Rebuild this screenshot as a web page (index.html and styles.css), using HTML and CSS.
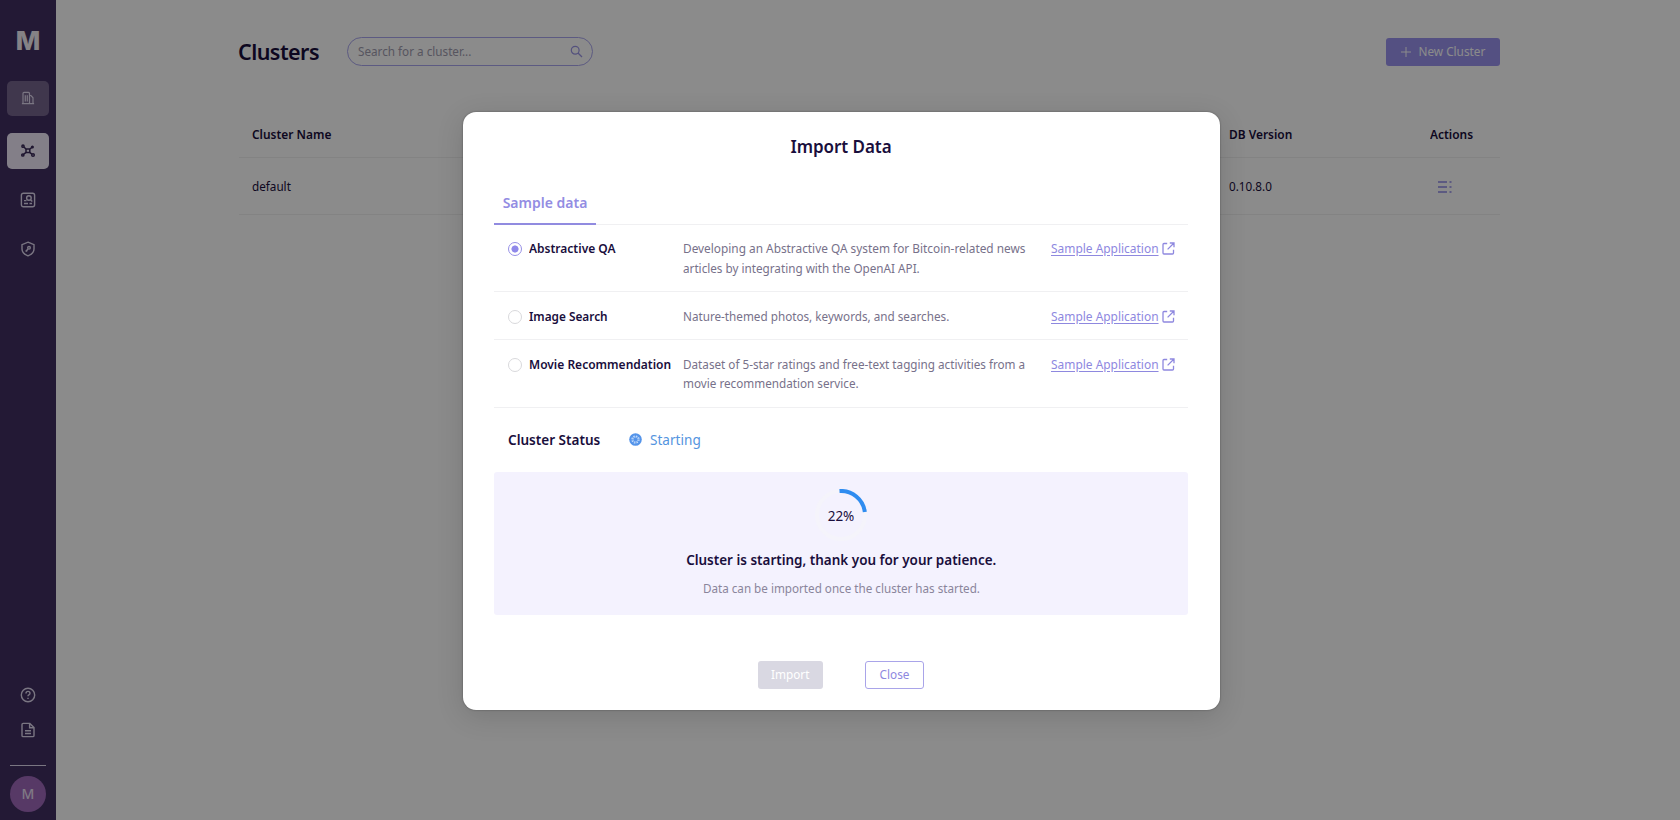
FILE: index.html
```html
<!DOCTYPE html>
<html lang="en">
<head>
<meta charset="utf-8">
<title>Clusters</title>
<link rel="stylesheet" href="styles.css">
</head>
<body>
<div class="app">
  <nav class="sidebar">
    <div class="logo">M</div>
    <a class="nav-item muted"><svg width="14" height="14" viewBox="0 0 14 14"><path d="M2 12.5V2.4Q2 1.4 3 1.4H7.5Q8.5 1.4 8.5 2.4V12.5M8.5 4.5H10L12 6.8V12.5M.9 12.6H13.1M4.3 4.2V10.4M6.3 4.2V10.4"/></svg></a>
    <a class="nav-item active"><svg width="16" height="14" viewBox="0 0 16 14"><rect x="6" y="5" width="3.8" height="3.6" rx=".8"/><circle cx="3" cy="2.2" r="1.1"/><circle cx="12.4" cy="3" r=".8"/><circle cx="2.8" cy="11" r="1.1"/><circle cx="13" cy="11" r="1.3"/><path d="M3.9 3L6.2 5.2M9.6 5.2L11.8 3.5M3.7 10.2L6.2 8.4M9.6 8.4L11.9 10.2"/></svg></a>
    <a class="nav-item"><svg width="16" height="16" viewBox="0 0 16 16"><rect x="1.4" y="1.2" width="13.2" height="13.6" rx="2"/><circle cx="8.9" cy="6" r="2.3"/><path d="M10.5 7.8L12.3 9.6M4 8.6H6.5M4 11.5H8M9.5 11.5H12"/></svg></a>
    <a class="nav-item"><svg width="16" height="16" viewBox="0 0 16 16"><path d="M8 1.2L14 3.6V8Q14 12.6 8 14.8Q2 12.6 2 8V3.6Z"/><circle cx="9" cy="6.8" r="1.3"/><path d="M8 7.9L5.6 10.4M6.6 9.4L7.4 10.2"/></svg></a>
    <div class="nav-bottom">
      <svg width="16" height="16" viewBox="0 0 16 16"><circle cx="8" cy="8" r="6.7"/><path d="M6 6.4Q6 4.4 8 4.4T10 6.3Q10 7.3 8.9 7.9Q8 8.4 8 9.3M8 10.8V12"/></svg>
      <svg width="16" height="16" viewBox="0 0 16 16"><path d="M2 2.6Q2 1.4 3.2 1.4H9.8L14 5.6V13.4Q14 14.6 12.8 14.6H3.2Q2 14.6 2 13.4ZM9.6 1.6V5.8H13.8M5 8.7H11M5 11.5H11"/></svg>
      <div class="nav-rule"></div>
      <div class="avatar">M</div>
    </div>
  </nav>
  <main class="page">
    <header class="topbar">
      <h1>Clusters</h1>
      <div class="search"><span class="body-text">Search for a cluster...</span><svg width="13" height="13" viewBox="0 0 13 13"><circle cx="5.2" cy="5.2" r="3.9"/><path d="M8 8L12 12"/></svg></div>
      <button class="new"><svg width="10" height="10" viewBox="0 0 10 10"><path d="M5 0V10M0 5H10"/></svg><span class="button-text">New Cluster</span></button>
    </header>
    <div class="table">
      <div class="tr th"><div class="c-name"><span>Cluster Name</span></div><div class="c-ver"><span>DB Version</span></div><div class="c-act"><span>Actions</span></div></div>
      <div class="tr"><div class="c-name"><span class="body-text">default</span></div><div class="c-ver"><span class="body-text">0.10.8.0</span></div><div class="c-act"><svg width="16" height="14" viewBox="0 0 16 14"><path d="M1 2H10M1 7H10M1 12H10M12.5 2H14.5M12.5 7H14.5M12.5 12H14.5"/></svg></div></div>
    </div>
  </main>
</div>
<div class="overlay">
  <section class="modal">
    <h2>Import Data</h2>
    <div class="tabs"><div class="tab">Sample data</div></div>
    <div class="row">
      <i class="radio on"></i><b>Abstractive QA</b>
      <p><span class="body-text lead">Developing an Abstractive QA system for Bitcoin-related news</span><br><span class="body-text">articles by integrating with the OpenAI API.</span></p>
      <a class="link"><u>Sample Application</u><svg width="13" height="13" viewBox="0 0 13 13"><path d="M5.2 1.5H2Q1 1.5 1 2.5V11Q1 12 2 12H10.5Q11.5 12 11.5 11V7.8M7.8 1H12V5.2M12 1L5.6 7.4"/></svg></a>
    </div>
    <div class="row short">
      <i class="radio"></i><b class="tight">Image Search</b>
      <p><span class="body-text">Nature-themed photos, keywords, and searches.</span></p>
      <a class="link"><u>Sample Application</u><svg width="13" height="13" viewBox="0 0 13 13"><path d="M5.2 1.5H2Q1 1.5 1 2.5V11Q1 12 2 12H10.5Q11.5 12 11.5 11V7.8M7.8 1H12V5.2M12 1L5.6 7.4"/></svg></a>
    </div>
    <div class="row">
      <i class="radio"></i><b>Movie Recommendation</b>
      <p><span class="body-text">Dataset of 5-star ratings and free-text tagging activities from a</span><br><span class="body-text">movie recommendation service.</span></p>
      <a class="link"><u>Sample Application</u><svg width="13" height="13" viewBox="0 0 13 13"><path d="M5.2 1.5H2Q1 1.5 1 2.5V11Q1 12 2 12H10.5Q11.5 12 11.5 11V7.8M7.8 1H12V5.2M12 1L5.6 7.4"/></svg></a>
    </div>
    <div class="status">
      <b>Cluster Status</b>
      <svg width="13" height="13" viewBox="0 0 13 13"><circle cx="6.5" cy="6.5" r="6.3" fill="#5494ea"/><circle cx="6.5" cy="6.5" r="3.5" fill="none" stroke="#c4dcfb" stroke-width="1.3" stroke-dasharray="1.6 1.15"/><circle cx="6.5" cy="6.5" r="2.4" fill="none" stroke="#b0cff8" stroke-width=".7"/></svg>
      <span>Starting</span>
    </div>
    <div class="panel">
      <div class="ring"><svg width="52" height="52" viewBox="0 0 52 52"><circle cx="26" cy="26" r="24" fill="none" stroke="#f5f4fb" stroke-width="4"/><path d="M24.5 2A24 24 0 0 1 49.8 23" fill="none" stroke="#2f8cf0" stroke-width="4"/></svg><span>22%</span></div>
      <strong>Cluster is starting, thank you for your patience.</strong>
      <em>Data can be imported once the cluster has started.</em>
    </div>
    <div class="buttons"><button class="import"><span class="button-text">Import</span></button><button class="close"><span class="button-text">Close</span></button></div>
  </section>
</div>
</body>
</html>
```
FILE: styles.css
```css
* { box-sizing: border-box; }
body { margin: 0; font: 13px/19.5px "Noto Sans", sans-serif; color: #190e3c; background: #fff; overflow: hidden; }
h1, h2, p { margin: 0; }
button { border: 0; padding: 0; font: inherit; display: flex; align-items: center; justify-content: center; }
svg { display: block; flex: none; }
span, b, u, strong, em { white-space: nowrap; display: inline-block; transform-origin: left center; }
b, strong { font-weight: 600; }
.body-text { transform: scaleX(.9); }
.body-text.lead { transform: scaleX(.911); }
.button-text { transform: scaleX(.905); transform-origin: center; }
.app { display: flex; height: 820px; background: #412f62; }
.sidebar { width: 56px; background: #412f62; display: flex; flex-direction: column; align-items: center; }
.sidebar svg { fill: none; stroke: #e0d8ef; stroke-width: 1.4; }
.logo { margin-top: 25px; height: 31px; font: 800 26px/31px Inter, sans-serif; color: #f4eff6; }
.nav-item { width: 42px; height: 35px; border-radius: 5px; display: flex; align-items: center; justify-content: center; margin-bottom: 14px; }
.nav-item.muted { margin: 24.5px 0 17.5px; background: #76658e; }
.nav-item.muted svg { stroke-width: 1.2; margin-bottom: 1px; }
.nav-item.active { background: #f0eafa; height: 36px; margin-bottom: 13px; }
.nav-item.active svg { stroke: #392858; stroke-width: 1.5; }
.nav-bottom { margin-top: auto; display: flex; flex-direction: column; align-items: center; padding-bottom: 8px; }
.nav-bottom svg { margin-bottom: 19px; }
.nav-rule { width: 36px; height: 1px; background: #e0d8ef; margin: 8px 0 10px; }
.avatar { width: 36px; height: 36px; border-radius: 50%; background: #a069bc; color: #eadff3; font: 500 14px/36px "Noto Sans", sans-serif; text-align: center; }
.page { flex: 1; padding: 37px 180px 0 183px; background: #fff; }
.topbar { display: flex; align-items: center; height: 29px; }
h1 { font-size: 21.5px; font-weight: 600; line-height: 29px; width: 109px; margin-left: -1px; white-space: nowrap; letter-spacing: -.55px; }
.search { width: 246px; height: 29px; border: 1px solid #aaa6ee; border-radius: 15px; display: flex; align-items: center; justify-content: space-between; padding: 0 9px 0 10px; color: #a09caf; }
.search svg { fill: none; stroke: #9a95e6; stroke-width: 1.2; }
.new { margin-left: auto; width: 114px; height: 28px; border-radius: 3px; background: #9a93ee; color: #fff; gap: 8px; }
.new svg { stroke: #fff; stroke-width: 1; transform: translateX(4px); }
.table { margin-top: 36px; }
.tr { height: 57px; border-bottom: 1px solid #f0f0f0; display: flex; align-items: center; padding: 1px 0 0 13px; }
.th { height: 56px; font-weight: 600; align-items: flex-start; padding-top: 22.5px; }
.th span { transform: scaleX(.917); }
.c-name { width: 977px; }
.c-ver { width: 201px; }
.c-act svg { fill: none; stroke: #8f89e8; stroke-width: 1.6; margin-left: 6.5px; }
.overlay { position: absolute; inset: 0; background: rgba(0,0,0,.455); }
.modal { width: 757px; height: 598px; margin: 111.5px 0 0 462.5px; border-radius: 13px; background: #fff; padding: 0 31.5px; box-shadow: 0 6px 28px rgba(0,0,0,.14), 0 0 2px rgba(0,0,0,.4); }
h2 { height: 71px; line-height: 70px; font-size: 17px; font-weight: 600; text-align: center; letter-spacing: -.05px; }
.tabs { height: 42px; border-bottom: 1px solid #f0f0f2; }
.tab { width: 102px; height: 42px; line-height: 40px; text-align: center; border-bottom: 2px solid #918be0; color: #938de3; font-size: 14px; font-weight: 600; white-space: nowrap; }
.row { height: 67.5px; border-bottom: 1px solid #f0f0f2; display: grid; grid-template-columns: 21px 154px 367.5px 1fr; padding: 14.5px 0 0 14px; align-items: start; }
.row.short { height: 48px; }
.row b { transform: scaleX(.923); }
.row b.tight { transform: scaleX(.908); }
.radio { width: 14px; height: 14px; border: 1px solid #d9d9dc; border-radius: 50%; margin-top: 3px; }
.radio.on { border-color: #9790e6; background: radial-gradient(circle, #9089ea 3.2px, transparent 3.9px); }
p { color: #77718a; }
.link { display: flex; align-items: center; color: #8e88df; }
.link u { text-underline-offset: 2px; transform: scaleX(.918); }
.link svg { fill: none; stroke: #8e88df; stroke-width: 1.3; margin-left: -6px; }
.status { height: 64px; display: flex; align-items: center; padding-left: 14px; font-size: 14px; }
.status b { width: 121px; transform: scaleX(.967); }
.status span { color: #5494e0; margin-left: 8px; transform: scaleX(.97); }
.panel { height: 143px; background: #f4f2fe; border-radius: 3px; display: flex; flex-direction: column; align-items: center; padding-top: 17px; }
.ring { display: grid; place-items: center; height: 52px; }
.ring > * { grid-area: 1 / 1; }
.ring span { margin-top: 4px; font-size: 13.5px; }
.panel strong { font-size: 14px; margin-top: 9px; transform: scaleX(.962); transform-origin: center; }
.panel em { font-style: normal; color: #8a859b; margin-top: 9.5px; transform: scaleX(.897); transform-origin: center; }
.buttons { display: flex; justify-content: center; gap: 42px; margin-top: 46.5px; }
.buttons button { height: 28px; border-radius: 3px; }
.import { width: 65px; background: #d9d8e2; color: #fff; }
.close { width: 59px; border: 1px solid #a9a4e9; background: #fff; color: #8e88df; }
```
